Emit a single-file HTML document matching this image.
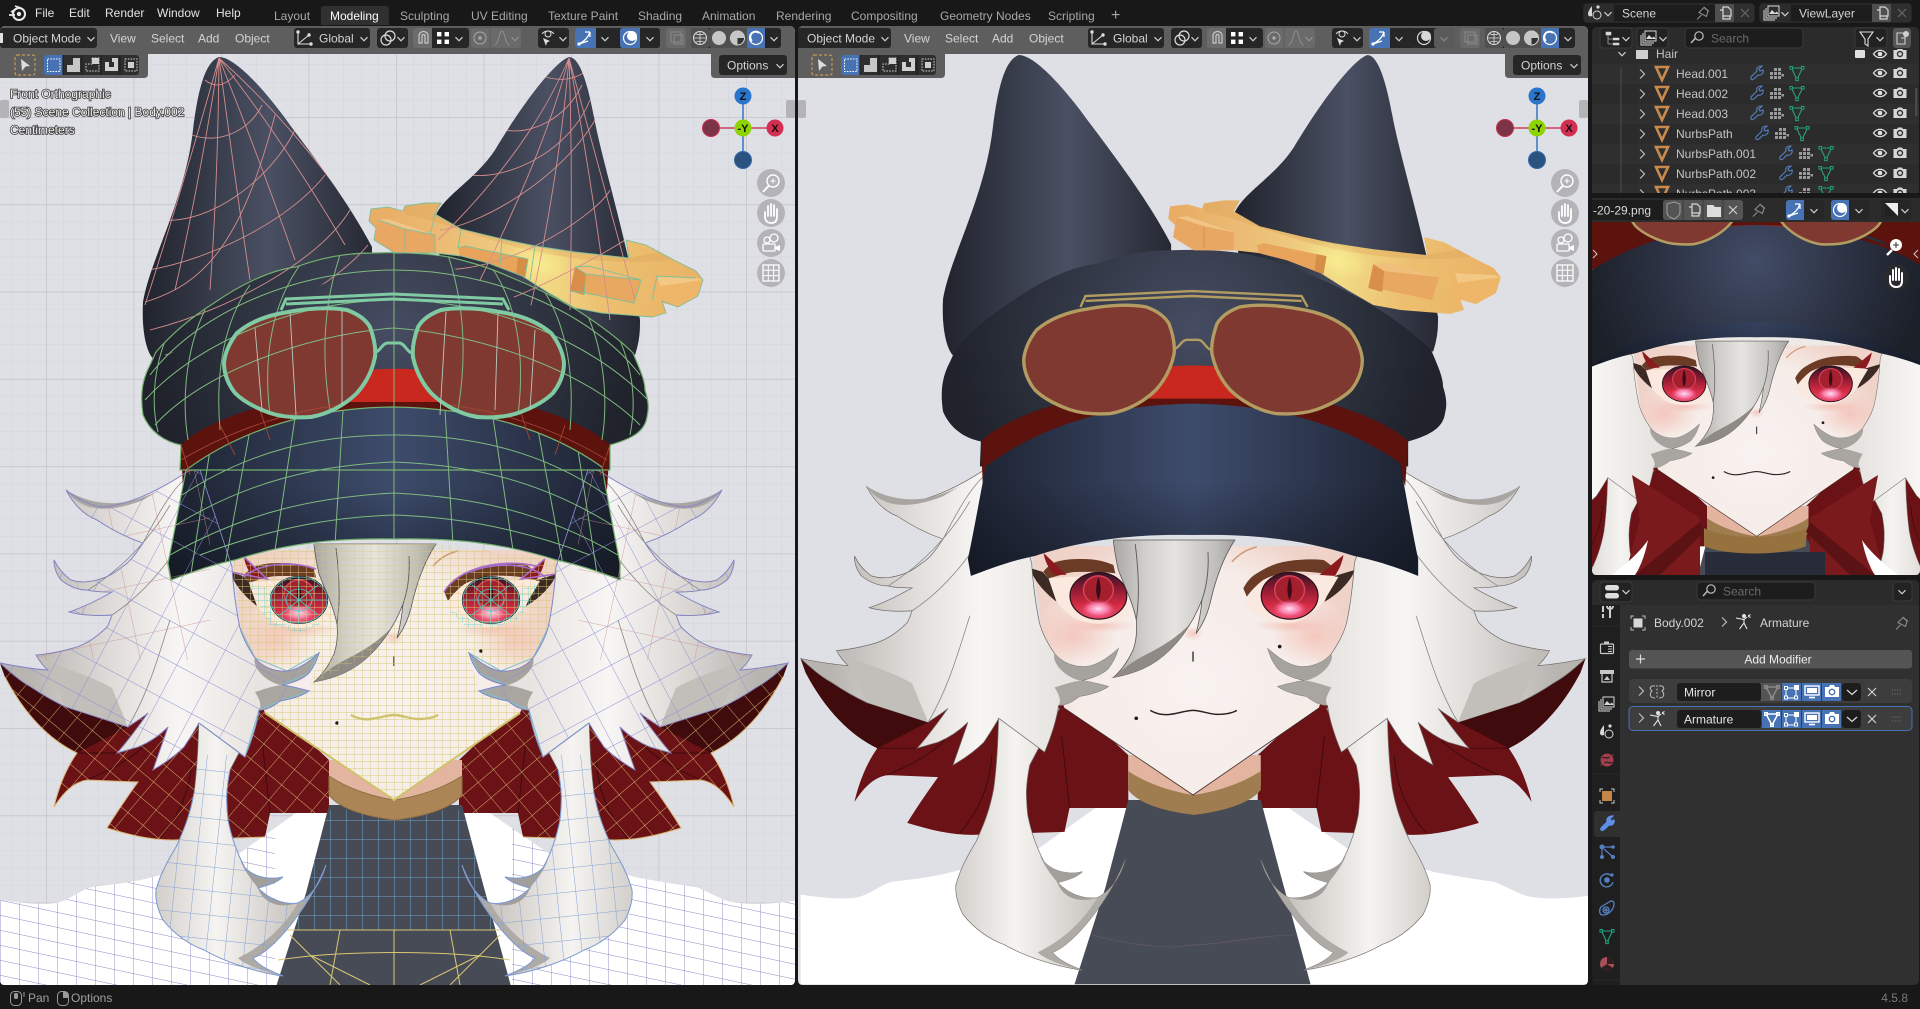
<!DOCTYPE html>
<html><head><meta charset="utf-8"><title>Blender</title>
<style>
html,body{margin:0;padding:0;background:#181818;width:1920px;height:1009px;overflow:hidden}
svg{display:block}
text{font-family:"Liberation Sans",sans-serif;font-size:12px;fill:#c8c8c8;white-space:pre}
.m{fill:#e2e2e2}.t{fill:#a8a8a8}.h{fill:#d4d4d4}.o{fill:#c4c4c4}
.ov{fill:#f2f2f2;stroke:#3a3a3a;stroke-width:1.6px;paint-order:stroke}
.g{font-size:11px;font-weight:bold;fill:#111;text-anchor:middle}
</style></head><body>
<svg width="1920" height="1009" viewBox="0 0 1920 1009" xmlns="http://www.w3.org/2000/svg">
<defs>
<pattern id="pSub" width="17.5" height="17.46" patternUnits="userSpaceOnUse" x="46" y="12.2"><path d="M0 0H17.5M0 0V17.46" stroke="#d4d4dc" stroke-width="1" fill="none"/></pattern>
<pattern id="pMain" width="87.5" height="87.3" patternUnits="userSpaceOnUse" x="46" y="29.7"><path d="M0 0H87.5M0 0V87.3" stroke="#c4c4cb" stroke-width="1.6" fill="none"/></pattern>
<pattern id="pFace" width="8" height="7" patternUnits="userSpaceOnUse" x="394" y="600"><path d="M0 0H8M0 0V7" stroke="#d3c972" stroke-width=".9" fill="none"/></pattern>
<pattern id="pHair" width="36" height="36" patternUnits="userSpaceOnUse" patternTransform="rotate(28)"><path d="M0 0H36M0 0V36" stroke="#8c8cd2" stroke-width=".9" fill="none"/></pattern>
<pattern id="pHair2" width="46" height="50" patternUnits="userSpaceOnUse" patternTransform="rotate(-12)"><path d="M0 0H46M0 0V50" stroke="#c98d8d" stroke-width=".8" fill="none"/></pattern>
<pattern id="pLock" width="19" height="24" patternUnits="userSpaceOnUse" patternTransform="rotate(6)"><path d="M0 0H19M0 0V24" stroke="#83a1d8" stroke-width="1" fill="none"/></pattern>
<pattern id="pRed" width="20" height="20" patternUnits="userSpaceOnUse" patternTransform="rotate(40)"><path d="M0 0H20M0 0V20" stroke="#d8b46f" stroke-width=".9" fill="none"/></pattern>
<pattern id="pBody" width="19" height="15" patternUnits="userSpaceOnUse" patternTransform="skewY(12)"><path d="M0 0H19M0 0V15" stroke="#8d86c6" stroke-width=".9" fill="none"/></pattern>
<pattern id="pNeck" width="16" height="19" patternUnits="userSpaceOnUse" x="394" y="820"><path d="M0 0H16M0 0V19" stroke="#6fa6cf" stroke-width="1" fill="none"/></pattern>
<pattern id="pEye" width="6" height="6" patternUnits="userSpaceOnUse"><path d="M0 0H6M0 0V6" stroke="#6fd4c4" stroke-width="1" fill="none"/></pattern>

<linearGradient id="gEar" x1="0" y1="0" x2="1" y2="0"><stop offset="0" stop-color="#20232c"/><stop offset=".55" stop-color="#4a5063"/><stop offset="1" stop-color="#262933"/></linearGradient>
<radialGradient id="gDome" gradientUnits="userSpaceOnUse" cx="394" cy="330" r="240"><stop offset="0" stop-color="#464c62"/><stop offset=".6" stop-color="#2f3441"/><stop offset="1" stop-color="#20232c"/></radialGradient>
<linearGradient id="gVis" x1="0" y1="0" x2="1" y2="0"><stop offset="0" stop-color="#1c2230"/><stop offset=".5" stop-color="#3e4c6c"/><stop offset="1" stop-color="#1c2230"/></linearGradient>
<linearGradient id="gVisS" x1="0" y1="0" x2="0" y2="1"><stop offset=".45" stop-color="#0c1018" stop-opacity="0"/><stop offset="1" stop-color="#0c1018" stop-opacity=".5"/></linearGradient>
<linearGradient id="gRing" gradientUnits="userSpaceOnUse" x1="375" y1="230" x2="700" y2="290"><stop offset="0" stop-color="#e9ad66"/><stop offset=".3" stop-color="#edc27a"/><stop offset=".52" stop-color="#f2dc86"/><stop offset=".72" stop-color="#ecc070"/><stop offset="1" stop-color="#eab266"/></linearGradient>
<radialGradient id="gRingH"><stop offset="0" stop-color="#f8ec90"/><stop offset="1" stop-color="#f8ec90" stop-opacity="0"/></radialGradient>
<linearGradient id="gHair" gradientUnits="userSpaceOnUse" x1="30" y1="640" x2="260" y2="640"><stop offset="0" stop-color="#b8b5b1"/><stop offset=".35" stop-color="#dedbd8"/><stop offset=".65" stop-color="#f8f6f4"/><stop offset="1" stop-color="#e6e3e0"/></linearGradient>
<linearGradient id="gLock" gradientUnits="userSpaceOnUse" x1="160" y1="850" x2="300" y2="850"><stop offset="0" stop-color="#d5d2ce"/><stop offset=".4" stop-color="#f6f4f1"/><stop offset="1" stop-color="#c5c1bd"/></linearGradient>
<linearGradient id="gBang" x1="0" y1="0" x2="1" y2="0"><stop offset="0" stop-color="#a9a7a4"/><stop offset=".25" stop-color="#d0cecb"/><stop offset=".5" stop-color="#e6e4e1"/><stop offset=".85" stop-color="#c0bebb"/><stop offset="1" stop-color="#a0a09e"/></linearGradient>
<radialGradient id="gFace" gradientUnits="userSpaceOnUse" cx="394" cy="690" r="170"><stop offset="0" stop-color="#f8f2f0"/><stop offset=".7" stop-color="#f6ece8"/><stop offset="1" stop-color="#efd2c8"/></radialGradient>
<radialGradient id="gCheek"><stop offset="0" stop-color="#f3bdb2" stop-opacity=".75"/><stop offset="1" stop-color="#f3bdb2" stop-opacity="0"/></radialGradient>
<linearGradient id="gIris" x1="0" y1="0" x2="0" y2="1"><stop offset="0" stop-color="#301428"/><stop offset=".35" stop-color="#8b1a30"/><stop offset=".7" stop-color="#d42c44"/><stop offset="1" stop-color="#e84a70"/></linearGradient>
<radialGradient id="gPink"><stop offset="0" stop-color="#ffe0f2"/><stop offset=".55" stop-color="#ff90c0" stop-opacity=".8"/><stop offset="1" stop-color="#ff6090" stop-opacity="0"/></radialGradient>
<radialGradient id="gHatI" gradientUnits="userSpaceOnUse" cx="1755" cy="262" r="170"><stop offset="0" stop-color="#424c66"/><stop offset=".6" stop-color="#2a3040"/><stop offset="1" stop-color="#1c2029"/></radialGradient>

<path id="earL" d="M219 57C205 62 198 90 193 130C185 200 150 260 143 302C141 340 150 360 156 360L372 262V247C350 205 320 165 290 125C265 90 235 57 219 57Z"/>
<path id="earR" d="M569 57C555 62 525 100 495 150C475 180 445 195 436 215L440 262L635 355C640 340 640 330 640 320C635 290 628 257 628 257C615 200 600 150 594 117C588 85 580 57 569 57Z"/>
<path id="dome" d="M143 415C140 395 142 380 150 365L156 352C175 330 195 315 214 303C240 285 270 270 296 267C320 258 345 253 372 253C400 252 425 253 449 257C475 263 495 270 510 277C535 287 560 300 577 310C600 325 620 340 633 353C640 370 645 380 645 390C650 405 648 412 647 417C645 430 635 438 610 445L610 470H180L181 445C165 442 150 432 143 415Z"/>
<path id="visor" d="M186 470C240 430 310 408 393 407C480 408 550 430 602 467C608 500 615 540 620 563V580C600 572 580 565 556 560C500 542 450 538 394 539C340 538 290 542 235 560C210 565 190 573 171 580L168 563C175 530 180 500 186 470Z"/>
<path id="hairS" d="M190 470C160 490 130 505 102 507C88 505 76 498 66 490C74 505 84 515 97 520C112 530 128 538 143 543C135 555 130 562 122 567C112 575 105 578 97 580C85 583 78 582 71 580C64 575 58 568 54 560C54 568 57 575 61 580C70 587 78 590 87 590C95 592 104 592 112 592C98 600 84 607 69 612C84 616 98 616 112 615C110 620 109 624 107 627C97 637 88 643 77 647C63 651 50 654 36 655C40 662 44 667 48 670C32 669 15 666 0 663C10 672 20 681 31 687C43 695 55 702 66 707L128 727C135 722 142 718 148 713C138 727 128 741 117 753L138 747C150 742 160 735 168 727C163 741 158 756 153 770C165 763 176 755 184 747C190 738 195 730 199 723L245 757C252 740 257 725 259 710C268 710 275 705 280 701C292 699 302 696 309 691C298 688 290 686 282 685C292 683 302 680 309 673C313 668 317 660 319 653C308 663 297 670 287 671C275 672 262 667 255 658C246 645 242 635 240 628C236 610 233 585 232 567L200 470Z"/>
<path id="lock" d="M199 700C199 745 197 770 194 793C190 815 184 830 176 847C167 862 160 875 156 890C155 900 158 910 163 920C175 935 190 945 204 950C225 962 255 972 283 976C268 970 258 965 253 958C275 950 310 905 326 865C320 885 310 897 298 903C285 905 270 900 258 888C265 886 275 884 283 877C270 880 255 878 245 868C238 855 232 840 228 820C226 800 226 790 230 770L260 713Z"/>
<path id="redH" d="M0 663L5 677C25 715 50 740 77 753C65 770 58 790 54 807C65 790 75 782 87 780L138 782C125 800 115 815 107 828C130 835 150 840 173 840L265 837L270 813H329V760L265 700L150 690L31 685Z"/>
<path id="redO" d="M0 663L5 677C25 715 50 740 77 753L128 727L66 707L31 687Z"/>
<path id="face" d="M232 550H556L560 600L545 650L520 713L394 800L265 713L245 660Z"/>
<path id="neck" d="M329 805H462L480 873L512 990H275L306 893Z"/>
<path id="body" d="M0 900C20 903 40 905 56 903C70 900 80 890 92 887C110 885 135 882 153 877L240 853L296 813L327 812H460L490 813L548 853L635 877C650 880 680 885 696 887C710 892 725 903 740 903C760 905 780 903 800 900V990H0Z"/>
<path id="lens" d="M288 312C310 308 330 307 347 310C358 314 366 320 370 327C374 338 376 348 375 357C372 372 365 384 357 393C345 405 328 414 311 417C296 418 282 417 270 413C256 408 244 402 235 393C228 384 224 374 224 363C225 352 230 342 237 333C250 322 268 315 288 312Z"/>
<path id="ring" d="M371 209L388 207L403 211L405 206L425 203L441 203L435 214L461 229L502 239L535 246L575 252L629 258L626 240L646 245L674 260L696 271L703 280L698 296L678 307L662 301L666 313L652 317L602 313L575 308L549 293L522 276L488 263L461 256L435 253L395 253L374 240L376 228L369 221Z"/>

<g id="halfBack"><use href="#redH" fill="#6b1216"/><use href="#redO" fill="#3f0b0d"/>
  <path d="M270 813L262 740M232 835L200 745M160 838C180 815 190 790 192 760M77 753L117 753M87 780C110 770 130 760 145 745" fill="none" stroke="#3a0a0c" stroke-width=".9"/>
</g>
<g id="halfLock">
  <use href="#lock" fill="url(#gLock)" stroke="#77736f" stroke-width=".7"/>
  <path d="M326 865C310 905 275 950 253 958C258 965 268 970 283 976C265 972 245 965 238 958C265 945 285 925 298 903C310 897 320 885 326 865Z" fill="#aeaaa6"/>
  <path d="M283 877C275 884 265 886 258 888C252 880 246 874 240 860C248 875 265 880 283 877Z" fill="#a29e9a"/>
  <path d="M298 903C285 905 270 900 258 888C262 900 275 910 298 903Z" fill="#a29e9a"/>
</g>
<g id="halfHair">
  <use href="#hairS" fill="url(#gHair)" stroke="#6f6b68" stroke-width=".7"/>
  <path d="M36 655C60 668 90 675 112 688L128 727L66 707L48 670Z" fill="#c2beba"/>
  <path d="M319 653C308 663 297 670 287 671C275 672 262 667 255 658C252 665 262 680 280 685C292 683 302 680 309 673C313 668 317 660 319 653Z" fill="#a6a29e"/>
  <path d="M309 691C298 688 290 686 282 685C272 686 262 690 255 692C260 700 262 706 259 710C268 710 275 705 280 701C292 699 302 696 309 691Z" fill="#a9a5a1"/>
  <path d="M66 490C80 510 105 515 143 500L160 490C130 505 100 510 66 490Z" fill="#a9a5a1"/>
  <path d="M143 543C160 510 172 490 186 478M88 590C120 570 150 540 170 505M112 615C150 590 190 540 205 490M128 727C150 690 160 650 170 620" stroke="#8a8684" stroke-width=".8" fill="none"/>
</g>
<g id="eyeL">
  <path d="M230 572C234 584 244 596 257 606L249 582.500L243 576Z" fill="#3c2a24"/>
  <path d="M249 582.500L270.500 581H300L321 582.500L331 619C318 626 308 628 297 628C285 627 275 624 270.500 619C262 613 257 606 257 606Z" fill="#fbe9e0"/>
  <path d="M243.700 576C248 570 254 566 260 565C268 563 276 563 284 563C295 563 305 565 314 569L316 577.500C305 576 295 576 284 576C278 576 272 576 267 577.500L249 582.500Z" fill="#6b3b26"/>
  <path d="M244 557L267 579H254C249 572 245 565 244 557Z" fill="#8a1a1e"/>
  <ellipse cx="299" cy="600" rx="28.500" ry="23.400" fill="url(#gIris)" stroke="#2a0f18" stroke-width="1.200"/>
  <ellipse cx="299" cy="594" rx="15" ry="14" fill="#a5202f" stroke="#d84258" stroke-width="1.500"/>
  <path d="M299 581C296 590 296 598 299 604C302 598 302 590 299 581Z" fill="#3e0a18"/>
  <ellipse cx="299" cy="613" rx="17" ry="9" fill="url(#gPink)"/>
</g>
<g id="eyeR">
  <path d="M556.600 574C552 586 540 598 526 606L536.500 580Z" fill="#3c2a24"/>
  <path d="M446 607.600L461 584L518 579L540 581L525 606C518 614 508 622 498 626C488 628 478 627 471 624C460 620 452 614 446 607.600Z" fill="#fbe9e0"/>
  <path d="M444.500 592.500C448 586 452 581 458 577.500C468 571 476 568 485 566C500 563 515 563 525 564C530 567 535 571 538 576L525 577.500C512 576 500 575 488 576C480 578 472 580 464.600 584C458 589 452 595 448 601Z" fill="#6b3b26"/>
  <path d="M545 559L521 579L536.500 580C541 573 544 566 545 559Z" fill="#8a1a1e"/>
  <ellipse cx="491" cy="600" rx="28.500" ry="23.400" fill="url(#gIris)" stroke="#2a0f18" stroke-width="1.200"/>
  <ellipse cx="491" cy="594" rx="15" ry="14" fill="#a5202f" stroke="#d84258" stroke-width="1.500"/>
  <path d="M491 581C488 590 488 598 491 604C494 598 494 590 491 581Z" fill="#3e0a18"/>
  <ellipse cx="491" cy="613" rx="17" ry="9" fill="url(#gPink)"/>
  <path d="M433 566C440 558 449 553 458 551" fill="none" stroke="#cf9878" stroke-width="1.500"/>
</g>
<g id="charA">
  <use href="#body" fill="#fff"/>
  <use href="#halfBack"/><use href="#halfBack" transform="matrix(-1 0 0 1 788 0)"/>
  <use href="#earL" fill="url(#gEar)"/><use href="#earR" fill="url(#gEar)"/>
  <use href="#neck" fill="#474b55"/>
  <path d="M329 760H462V790L395 812L329 790Z" fill="#e3b5a0"/>
  <path d="M329 776C350 790 375 797 394 800C415 797 440 790 462 776V795C450 810 420 817 395 820C370 817 340 810 329 795Z" fill="#a07d50"/>
  <use href="#face" fill="url(#gFace)"/>
  <path d="M265 713L394 800L520 713" fill="none" stroke="#3a2a28" stroke-width=".8"/>
  <ellipse cx="275" cy="640" rx="42" ry="30" fill="url(#gCheek)"/><ellipse cx="515" cy="640" rx="42" ry="30" fill="url(#gCheek)"/>
  <ellipse cx="300" cy="630" rx="38" ry="7" fill="url(#gCheek)"/><ellipse cx="492" cy="630" rx="38" ry="7" fill="url(#gCheek)"/>
  <ellipse cx="394" cy="638" rx="10" ry="7" fill="url(#gCheek)"/>
  <use href="#eyeL"/><use href="#eyeR"/>
  <path d="M351 715C358 719 364 720 371 719C380 718 387 715 394 715C402 715 410 719 418 719C426 719 433 718 438 715" fill="none" stroke="#2a2222" stroke-width="1.500"/>
  <circle cx="337" cy="723" r="1.800" fill="#1a1a1a"/><circle cx="481" cy="651" r="1.800" fill="#1a1a1a"/>
  <rect x="393.300" y="656" width="1.400" height="10" fill="#333"/>
</g>
<g id="charB"><use href="#halfLock"/><use href="#halfLock" transform="matrix(-1 0 0 1 788 0)"/></g>
<g id="charC">
  <use href="#halfHair"/><use href="#halfHair" transform="matrix(-1 0 0 1 788 0)"/>
  <path d="M314 544C315 555 317 565 319 574C325 590 333 605 337 624C338 635 337 645 334 654C329 665 322 675 314 682C325 680 335 677 344 673C355 668 363 662 371 654C385 640 396 622 403 604C402 615 400 627 397 638C403 630 408 620 411 608C415 590 422 565 436 544Z" fill="url(#gBang)" stroke="#5b5754" stroke-width=".8"/>
  <path d="M314 682C325 680 335 677 344 673C355 668 363 662 371 654C378 646 385 637 391 628C380 640 365 650 345 660C335 665 325 672 314 682Z" fill="#8f8a86"/>
  <path d="M409 556C410 575 408 590 403 604M336 548C340 580 340 605 337 624" stroke="#5b5754" fill="none" stroke-width=".9"/>
  <use href="#dome" fill="url(#gDome)"/>
  <path d="M181 445C200 425 260 402 300 400H490C530 402 590 425 610 445L607 490L600 470L186 470L183 490Z" fill="#5c120d"/>
  <path d="M360 371C380 368 410 368 430 371L446 402L343 402Z" fill="#c9281e"/>
  <use href="#visor" fill="url(#gVis)"/><use href="#visor" fill="url(#gVisS)"/>
  <g fill="#803930" stroke="#b39c62" stroke-width="3.400"><use href="#lens"/><use href="#lens" transform="matrix(-1 0 0 1 788 0)"/></g>
  <path d="M281 310L286 299L393 294L503 299L509 310M286 304L393 299L503 304M375 352C380 352 382 343 388 343H399C405 343 407 353 413 353" fill="none" stroke="#b39c62" stroke-width="2.400"/>
  <use href="#ring" fill="url(#gRing)"/>
  <path d="M405 206L425 203L441 203L435 214L461 229L502 239L535 246L575 252L629 258L660 252L674 260L640 262C600 262 560 258 520 248C480 238 450 225 420 218L405 214Z" fill="#dca45c" opacity=".4"/>
  <ellipse cx="538" cy="263" rx="34" ry="18" fill="url(#gRingH)" transform="rotate(15 538 263)"/>
  <path d="M378 220L405 229L435 235V253H395L374 240L376 228Z" fill="#e8a864"/>
  <path d="M378 220L388 219L435 235L405 229Z" fill="#f2c488"/>
  <path d="M405 229V251" stroke="#d69449"/>
  <path d="M458 248L465 246L528 259L525 277L488 263L460 256Z" fill="#e9a45c"/>
  <path d="M528 259L525 277L516 274L518 257Z" fill="#d48f47"/>
  <path d="M575 267L589 266L641 280L634 303L586 293L570 291Z" fill="#e9a85f"/>
  <path d="M575 267L586 274L584 295L570 291Z" fill="#d98f4a"/>
  <path d="M575 267L589 266L641 280L586 274Z" fill="#f0bf7c"/>
  <path d="M657 276L696 278L703 280L698 296L678 307L652 300Z" fill="#eeb669"/>
  <path d="M657 276L696 278L703 280L660 286Z" fill="#f3c884"/>
</g>
<g id="char"><use href="#charA"/><use href="#charB"/><use href="#charC"/></g>

<clipPath id="cL"><path d="M0 32Q0 26 6 26H789Q795 26 795 32V980Q795 985 790 985H5Q0 985 0 980Z"/></clipPath>
<clipPath id="cR"><path d="M798 32Q798 26 804 26H1582Q1588 26 1588 32V980Q1588 985 1583 985H803Q798 985 798 980Z"/></clipPath>
<clipPath id="cImg"><path d="M1592 222H1920V570Q1920 575 1915 575H1597Q1592 575 1592 570Z"/></clipPath>
<clipPath id="cOut"><rect x="1592" y="49" width="327" height="144"/></clipPath>
<clipPath id="kEarL"><use href="#earL"/></clipPath><clipPath id="kEarR"><use href="#earR"/></clipPath>
<clipPath id="kDome"><use href="#dome"/></clipPath><clipPath id="kVisor"><use href="#visor"/></clipPath>
<clipPath id="kHair"><use href="#hairS"/></clipPath><clipPath id="kLock"><use href="#lock"/></clipPath>
<clipPath id="kRed"><use href="#redH"/></clipPath><clipPath id="kFace"><use href="#face"/></clipPath>
<clipPath id="kBody"><use href="#body"/></clipPath><clipPath id="kNeck"><use href="#neck"/></clipPath>

<g id="chv"><path d="M-3.500-1.800L0 1.800L3.500-1.800" fill="none" stroke="#d0d0d0" stroke-width="1.200"/></g>
<g id="chr"><path d="M-2-4.500L2.500 0L-2 4.500" fill="none" stroke="#bdbdbd" stroke-width="1.200"/></g>
<g id="iObj"><path d="M-6-6H6L0 7Z" fill="none" stroke="#c98a4d" stroke-width="2.600"/></g>
<g id="iWr"><path d="M-6 6C-7 4-5 3-3 1L0-2C-1-5 1-7 5-7L2-4L3-2L6-3C7 1 3 3 1 2L-2 5C-4 7-5 7-6 6Z" fill="none" stroke="#5680c2" stroke-width="1.100"/></g>
<g id="iMod" fill="#9a9a9a"><rect x="-7" y="-1" width="3" height="3"/><rect x="-7" y="3" width="3" height="3"/><rect x="-3" y="-5" width="3" height="3"/><rect x="-3" y="-1" width="3" height="3"/><rect x="-3" y="3" width="3" height="3"/><rect x="1" y="-5" width="3" height="3"/><rect x="1" y="-1" width="3" height="3"/><rect x="1" y="3" width="3" height="3"/><rect x="4.500" y="1" width="2.500" height="2.500"/></g>
<g id="iTri"><path d="M-5.500-5H5.500L0 6.500Z" fill="none" stroke="#26a17d" stroke-width="1.100"/><g fill="#1f2a28" stroke="#26a17d"><rect x="-7" y="-6.500" width="2.600" height="2.600"/><rect x="4.400" y="-6.500" width="2.600" height="2.600"/><rect x="-1.300" y="5" width="2.600" height="2.600"/></g></g>
<g id="iEye"><path d="M-6.500 0C-3-5 3-5 6.500 0C3 5-3 5-6.500 0Z" fill="none" stroke="#e0e0e0" stroke-width="1.300"/><circle r="2.300" fill="#e0e0e0"/></g>
<g id="iCam"><path d="M-6.500-4H-3L-2-5.500H2L3-4H6.500V5H-6.500Z" fill="#d8d8d8"/><circle r="3.200" fill="#333"/><circle r="1.800" fill="#d8d8d8"/></g>
<g id="iCamW"><path d="M-7-4H-3L-2-6H2L3-4H7V6H-7Z" fill="#fff"/><circle cy="1" r="3.400" fill="#4772b3"/><circle cy="1" r="2" fill="#fff"/></g>
<g id="iDisp"><rect x="-7" y="-6" width="14" height="9" fill="none" stroke="#fff" stroke-width="1.400"/><rect x="-5" y="-4" width="10" height="5" fill="#fff"/><path d="M-3 5.500H3" stroke="#fff" stroke-width="1.600"/></g>
<g id="iEdit"><rect x="-6" y="-4" width="10" height="10" fill="none" stroke="#fff"/><rect x="2" y="-7" width="5" height="5" fill="#fff"/><g fill="#4772b3" stroke="#fff"><rect x="-7.500" y="-5.500" width="3" height="3"/><rect x="-7.500" y="4" width="3" height="3"/><rect x="2.500" y="4" width="3" height="3"/></g></g>
<g id="iMesh"><path d="M-6-5H6L0 6Z" fill="none" stroke="currentColor" stroke-width="1.500"/><g fill="none" stroke="currentColor"><rect x="-7.500" y="-6.500" width="3" height="3"/><rect x="4.500" y="-6.500" width="3" height="3"/><rect x="-1.500" y="4.500" width="3" height="3"/></g></g>
<g id="iArm" fill="none" stroke="#e6e6e6" stroke-width="1.100"><circle cx="1" cy="-6" r="1.400" fill="#e6e6e6"/><path d="M-7-4L1-2.500L4-5M1-3.500V1L-3.500 7M1 1L4 7M5-6L7.500-7.500M5-6L7.500-4.500"/></g>
<g id="iPin"><path d="M-6 6.500L-1.500 2M-4-0.500L3.500 3.500L5-2L1-5.500Z M1-6L6-1.500" fill="none" stroke="#8a8a8a" stroke-width="1.100"/></g>
<g id="iCopy"><path d="M-5-3H-2V6H5V3M-2-6H3L6-3V3H-2Z" fill="none" stroke="#d8d8d8" stroke-width="1.200"/></g>
<g id="iX"><path d="M-4-4L4 4M4-4L-4 4" fill="none" stroke="#d0d0d0" stroke-width="1.200"/></g>
<g id="iSearch"><circle cx="2" cy="-2" r="4.200" fill="none" stroke="#bbb" stroke-width="1.200"/><path d="M-1-.5L-6 5" stroke="#bbb" stroke-width="1.500"/></g>
<g id="iScene"><path d="M-3-7C-6-3-7-1-7 1C-7 3-5 4-3 3V-7Z" fill="#d8d8d8"/><circle cx="2" cy="2" r="4" fill="none" stroke="#d8d8d8"/><circle cx="3" cy="-6" r="1.600" fill="#d8d8d8"/></g>
<g id="iLayer"><path d="M-4-7H7V3H-4Z" fill="none" stroke="#d8d8d8"/><path d="M-6-5V5H5M-8-3V7H3" fill="none" stroke="#d8d8d8"/><path d="M-3 1L0-3L3 0L5-1.500L6.500 1Z" fill="#d8d8d8"/></g>
<g id="iGiz"><path d="M-6 6C-2 4 3 0 5-6M-6 6L3 3M5-6H0M5-6V-1" fill="none" stroke="#fff" stroke-width="1.300"/><circle cx="-6" cy="6" r="1.600" fill="#fff"/></g>
<g id="iOver"><circle r="6.500" fill="none" stroke="currentColor" stroke-width="1.200"/><circle cx="2" cy="-2" r="5" fill="currentColor"/></g>
<g id="iView"><circle cy="-3" r="3" fill="none" stroke="#ddd"/><path d="M-6-3C-3-7 3-7 6-3" fill="none" stroke="#ddd"/><path d="M-5 1L2 4L-1 5.500L-2 9Z" fill="#ddd"/></g>
<g id="iOrient"><path d="M-7-7V6H6M-7 6L4-3" fill="none" stroke="#ddd" stroke-width="1.100"/><circle cx="-7" cy="-6" r="1.700" fill="#ddd"/><circle cx="6" cy="6" r="1.700" fill="#ddd"/><circle cx="4" cy="-3" r="1.700" fill="#ddd"/></g>
<g id="iPivot"><circle cx="-2" cy="2" r="5" fill="none" stroke="#ddd" stroke-width="1.200"/><circle cx="2" cy="-2" r="5" fill="none" stroke="#ddd" stroke-width="1.200"/></g>
<g id="iMag"><path d="M-4 5V-2C-4-8 5-8 5-2V5H2V-2C2-4-1-4-1-2V5Z" fill="none" stroke="#c8c8c8" stroke-width="1.200"/></g>
<g id="iSnapG" fill="#fff"><rect x="-6" y="-6" width="4.400" height="4.400"/><rect x="1.600" y="-6" width="4.400" height="4.400"/><rect x="-6" y="1.600" width="4.400" height="4.400"/><rect x="1.600" y="1.600" width="4.400" height="4.400"/></g>

<g id="sel">
  <rect x="44" y="55" width="95" height="20" rx="3" fill="#2e2e2e"/>
  <path d="M47 55H63V75H47Q44 75 44 72V58Q44 55 47 55Z" fill="#4772b3"/>
  <rect x="47.500" y="59" width="12.500" height="12.500" fill="none" stroke="#fff" stroke-dasharray="1.600 1.200"/>
  <path d="M73 58H80V72H67V65H73Z" fill="#c6c6c6"/>
  <path d="M92 58H99V71H92M92 58V64H86V71H92" fill="none" stroke="#d0d0d0" stroke-dasharray="1.600 1.200"/><path d="M92 58H99V64H92Z" fill="#d0d0d0"/>
  <path d="M105 62H112V58H118V71H105Z" fill="#d0d0d0"/><rect x="109" y="62" width="5" height="5" fill="#2e2e2e"/>
  <rect x="125" y="59" width="12" height="12" fill="none" stroke="#cfcfcf" stroke-dasharray="1.600 1.200"/><rect x="128" y="62" width="6" height="6" fill="#cfcfcf"/>
  <path d="M63 55V75M82 55V75M101 55V75M120 55V75" stroke="#1c1c1c"/>
  <rect x="15" y="55" width="20" height="20" rx="2" fill="none" stroke="#c7994f" stroke-width="1.200" stroke-dasharray="3 2"/>
  <path d="M21 59L30 66L25.500 66.500L22 71Z" fill="#ddd"/>
</g>
<g id="hdr">
  <rect x="0" y="28" width="97" height="20" rx="3" fill="#262626"/>
  <rect x="-1" y="33" width="4" height="10" fill="#e0e0e0"/>
  <text x="13" y="42.500" class="h">Object Mode</text><use href="#chv" transform="translate(91,39)"/>
  <text x="110" y="42.500" class="h">View</text><text x="151" y="42.500" class="h">Select</text><text x="198" y="42.500" class="h">Add</text><text x="235" y="42.500" class="h">Object</text>
  <rect x="294" y="28" width="76" height="20" rx="3" fill="#262626"/><use href="#iOrient" transform="translate(305,38)"/>
  <text x="319" y="42.500" class="h">Global</text><use href="#chv" transform="translate(364,39)"/>
  <rect x="377" y="28" width="31" height="20" rx="3" fill="#262626"/><use href="#iPivot" transform="translate(388,38)"/><use href="#chv" transform="translate(401,39)"/>
  <rect x="413" y="28" width="56" height="20" rx="3" fill="#262626"/><path d="M416 28H432V48H416Q413 48 413 45V31Q413 28 416 28Z" fill="#6c6c6c"/>
  <use href="#iMag" transform="translate(423,38)"/><use href="#iSnapG" transform="translate(443,38)"/><use href="#chv" transform="translate(459,39)"/>
  <rect x="471" y="28" width="50" height="20" rx="3" fill="#6a6a6a"/><path d="M490 28V48" stroke="#5a5a5a"/>
  <circle cx="480" cy="38" r="6" fill="none" stroke="#aaa"/><circle cx="480" cy="38" r="1.700" fill="#aaa"/><path d="M494 45C499 45 499 31 502 31C505 31 505 45 510 45" fill="none" stroke="#8c8c8c"/><use href="#chv" transform="translate(515,39)" opacity=".4"/>
  <rect x="538" y="28" width="31" height="20" rx="3" fill="#262626"/><use href="#iView" transform="translate(548,37)"/><use href="#chv" transform="translate(563,39)"/>
  <rect x="575" y="28" width="48" height="20" rx="3" fill="#262626"/><path d="M578 28H596V48H578Q575 48 575 45V31Q575 28 578 28Z" fill="#4772b3"/><use href="#iGiz" transform="translate(585,38)"/><use href="#chv" transform="translate(605,39)"/>
  <rect x="666" y="28" width="20" height="20" rx="3" fill="#6a6a6a"/><rect x="671" y="32" width="10" height="10" fill="none" stroke="#8a8a8a"/><rect x="674" y="35" width="9" height="9" fill="none" stroke="#8a8a8a"/>
  <rect x="691" y="28" width="90" height="20" rx="3" fill="#262626"/>
  <rect x="691" y="28" width="19" height="20" rx="3" fill="#505050"/><rect x="710" y="28" width="18" height="20" fill="#505050"/><rect x="728" y="28" width="19" height="20" fill="#505050"/><rect x="747" y="28" width="18" height="20" fill="#4772b3"/>
  <circle cx="700" cy="38" r="6.500" fill="none" stroke="#ddd"/><path d="M693.500 38H706.500M700 31.500V44.500M695 33.500Q700 36 705 33.500M695 42.500Q700 40 705 42.500" fill="none" stroke="#ddd" stroke-width=".8"/>
  <circle cx="719" cy="38" r="7" fill="#c6c6c6"/>
  <circle cx="737.500" cy="38" r="7" fill="#333" stroke="#ddd"/><path d="M737.500 31A7 7 0 0 1 744.500 38H737.500V45A7 7 0 0 1 730.500 38A7 7 0 0 1 737.500 31Z" fill="#c6c6c6"/>
  <circle cx="756" cy="38" r="6.500" fill="none" stroke="#fff" stroke-width="1.200"/><path d="M752 41A5 5 0 0 1 759 33" fill="none" stroke="#fff" stroke-width="2"/>
  <use href="#chv" transform="translate(774,39)"/>
</g>
<g id="opt"><rect x="719" y="55" width="68" height="20" rx="3" fill="#262626"/><text x="727" y="69.500" class="h">Options</text><use href="#chv" transform="translate(780,66)"/></g>
<g id="giz">
  <path d="M743 96V160" stroke="#3d7bc8" stroke-width="1.600"/><path d="M711 128H775" stroke="#cc4158" stroke-width="1.600"/>
  <circle cx="743" cy="96" r="8.500" fill="#2a75cc"/><circle cx="743" cy="160" r="8.500" fill="#29527f" stroke="#2f69aa"/>
  <circle cx="775" cy="128" r="8.500" fill="#d32f50"/><circle cx="711" cy="128" r="8.500" fill="#7c3345" stroke="#c4304b"/>
  <circle cx="743" cy="128" r="8.500" fill="#8ed400"/>
  <text x="743" y="100" class="g">Z</text><text x="775" y="132" class="g">X</text><text x="743" y="132" class="g">-Y</text>
  <g fill="#b4b4b8"><circle cx="771" cy="183" r="14"/><circle cx="771" cy="213" r="14"/><circle cx="771" cy="243" r="14"/><circle cx="771" cy="273" r="14"/></g>
  <circle cx="773" cy="181" r="6" fill="none" stroke="#fff" stroke-width="1.400"/><path d="M773 178.500V183.500M770.500 181H775.500" stroke="#fff"/><path d="M769 185.500L763 192" stroke="#fff" stroke-width="2"/>
  <path d="M765 212V217C765 221 768 223 771 223C776 223 777 220 777 217V209M774 216V205M771 216V204M768 216V206" fill="none" stroke="#fff" stroke-width="1.800" stroke-linecap="round"/>
  <circle cx="767" cy="240" r="3" fill="none" stroke="#fff" stroke-width="1.300"/><circle cx="774" cy="238" r="4" fill="none" stroke="#fff" stroke-width="1.300"/><rect x="763" y="244" width="12" height="7" rx="1" fill="none" stroke="#fff" stroke-width="1.300"/><path d="M775 247L780 245V251L775 249Z" fill="#fff"/>
  <rect x="763" y="265" width="16" height="16" fill="none" stroke="#fff" stroke-width="1.300"/><path d="M768.300 265V281M773.600 265V281M763 270.300H779M763 275.600H779" stroke="#fff"/>
</g>
</defs>

<rect width="1920" height="1009" fill="#181818"/>

<!-- LEFT VIEWPORT -->
<g clip-path="url(#cL)">
  <rect x="0" y="26" width="795" height="959" fill="#dfdfe6"/>
  <rect x="0" y="26" width="795" height="959" fill="url(#pSub)"/>
  <rect x="0" y="26" width="795" height="959" fill="url(#pMain)"/>
  <use href="#charA"/>
  <g clip-path="url(#kBody)"><path d="M0 812H275V1000H0ZM512 812H800V1000H512Z" fill="url(#pBody)"/></g>
  <g clip-path="url(#kRed)"><rect x="0" y="660" width="330" height="190" fill="url(#pRed)"/></g>
  <g clip-path="url(#kRed)" transform="matrix(-1 0 0 1 788 0)"><rect x="0" y="660" width="330" height="190" fill="url(#pRed)"/></g>
  <path d="M5 677C25 715 50 740 77 753C65 770 58 790 54 807C65 790 75 782 87 780L138 782C125 800 115 815 107 828C130 835 150 840 173 840L265 837" fill="none" stroke="#d8b46f"/>
  <path d="M783 677C763 715 738 740 711 753C723 770 730 790 734 807C723 790 713 782 701 780L650 782C663 800 673 815 681 828C658 835 638 840 615 840L523 837" fill="none" stroke="#d8b46f"/>
  <g clip-path="url(#kNeck)"><rect x="270" y="810" width="250" height="120" fill="url(#pNeck)"/></g>
  <path d="M285 930H505M278 960C340 950 450 950 510 960M290 935L340 985M500 935L450 985M340 930L330 985M450 930L460 985M394 930V985M310 955L370 985M480 955L420 985" stroke="#d9c873" fill="none"/>
  <path d="M329 776C350 790 375 797 394 800C415 797 440 790 462 776V795C450 810 420 817 395 820C370 817 340 810 329 795Z" fill="#ab8556" stroke="#8d7044"/>
  <path d="M232 560L240 628L255 658L287 671L319 653L309 691L280 701L265 713L394 800L520 713L505 701L479 691L469 653L501 671L533 658L548 628L556 560L436 544H314Z" fill="url(#pFace)" opacity=".95"/>
  <path d="M265 713L394 800L520 713" fill="none" stroke="#cfc26a" stroke-width="2"/>
  <path d="M351 715C358 719 364 720 371 719C380 718 387 715 394 715C402 715 410 719 418 719C426 719 433 718 438 715" fill="none" stroke="#cfc26a" stroke-width="2.400"/>
  <g clip-path="url(#kFace)" opacity=".9"><path d="M249 582L272 590V620L300 628L331 619L300 633L268 624Z" fill="url(#pEye)"/><path d="M540 582L518 590V620L490 628L446 608L470 630L525 612Z" fill="url(#pEye)"/></g>
  <path d="M244 577C258 564 290 560 316 569M244 557L267 579L230 572M545 577C530 564 498 560 464 574M545 559L521 579L556 574M444 592C458 568 500 558 536 566" fill="none" stroke="#a76cc9" stroke-width="1.600"/>
  <g fill="none" stroke="#4fc7c4" stroke-width=".8"><ellipse cx="299" cy="600" rx="28" ry="23"/><ellipse cx="491" cy="600" rx="28" ry="23"/><ellipse cx="299" cy="600" rx="13" ry="11"/><ellipse cx="491" cy="600" rx="13" ry="11"/><path d="M271 600H327M299 577V623M280 585L318 615M318 585L280 615M463 600H519M491 577V623M472 585L510 615M510 585L472 615"/></g>
  <use href="#charB"/>
  <use href="#charC"/>
  <g clip-path="url(#kLock)"><rect x="150" y="755" width="180" height="235" fill="url(#pLock)"/></g>
  <g clip-path="url(#kLock)" transform="matrix(-1 0 0 1 788 0)"><rect x="150" y="755" width="180" height="235" fill="url(#pLock)"/></g>
  <path d="M194 793C190 815 184 830 176 847C167 862 160 875 156 890C155 900 158 910 163 920C175 935 190 945 204 950C225 962 255 972 283 976C268 970 258 965 253 958C275 950 310 905 326 865C320 885 310 897 298 903C285 905 270 900 258 888C265 886 275 884 283 877C270 880 255 878 245 868C238 855 232 840 228 820C226 800 226 790 230 770" fill="none" stroke="#7d9bd4"/>
  <path d="M594 793C598 815 604 830 612 847C621 862 628 875 632 890C633 900 630 910 625 920C613 935 598 945 584 950C563 962 533 972 505 976C520 970 530 965 535 958C513 950 478 905 462 865C468 885 478 897 490 903C503 905 518 900 530 888C523 886 513 884 505 877C518 880 533 878 543 868C550 855 556 840 560 820C562 800 562 790 558 770" fill="none" stroke="#7d9bd4"/>
  <g clip-path="url(#kHair)">
    <rect x="0" y="460" width="300" height="300" fill="url(#pHair)"/>
    <rect x="0" y="460" width="210" height="200" fill="url(#pHair2)"/>
  </g>
  <g clip-path="url(#kHair)" transform="matrix(-1 0 0 1 788 0)">
    <rect x="0" y="460" width="300" height="300" fill="url(#pHair)"/>
    <rect x="0" y="460" width="210" height="200" fill="url(#pHair2)"/>
  </g>
  <path d="M199 723L245 757L259 710L280 701L309 691L282 685L309 673L319 653L287 671L255 658L240 628" fill="none" stroke="#7cc3cb" stroke-width="1.100"/>
  <path d="M589 723L543 757L529 710L508 701L479 691L506 685L479 673L469 653L501 671L533 658L548 628" fill="none" stroke="#7cc3cb" stroke-width="1.100"/>
  <use href="#hairS" fill="none" stroke="#8585cb" stroke-width=".9"/><use href="#hairS" fill="none" stroke="#8585cb" stroke-width=".9" transform="matrix(-1 0 0 1 788 0)"/>
  <path d="M314 544C317 565 337 610 337 624C338 645 325 672 314 682L371 654L403 604L411 608L436 544Z" fill="url(#pFace)" opacity=".7"/>
  <g clip-path="url(#kEarL)" fill="none" stroke="#d58d8d" stroke-width=".9">
    <path d="M219 58Q185 180 145 305M219 58Q200 180 175 290M219 58Q218 180 210 290M219 58Q235 180 250 280M219 58Q260 160 295 260M219 58Q290 150 345 245M219 58Q310 140 375 245"/>
    <path d="M145 302C200 285 240 250 275 115M192 135C220 145 250 130 262 105M160 220C210 225 270 180 295 130M148 270C210 260 290 220 325 175M150 330C230 310 320 260 350 210M165 355C250 330 330 290 368 245M205 80Q219 92 235 75"/>
  </g>
  <g clip-path="url(#kEarR)" fill="none" stroke="#d58d8d" stroke-width=".9">
    <path d="M569 58Q530 150 438 240M569 58Q545 150 480 280M569 58Q560 170 530 310M569 58Q573 170 570 310M569 58Q590 170 610 320M569 58Q600 170 635 300"/>
    <path d="M440 230C480 225 560 180 595 120M470 175C510 180 570 150 590 100M505 130C530 135 565 120 582 85M440 270C520 270 600 210 610 190M480 310C540 290 610 250 625 240M540 75Q565 85 585 72"/>
  </g>
  <g clip-path="url(#kDome)" fill="none" stroke="#7fb97f" stroke-width="1">
    <path d="M394 250V410M340 255C325 300 320 350 330 410M300 265C275 300 262 350 270 415M250 285C225 320 215 370 220 430M205 310C190 340 180 390 188 440M170 330C155 360 150 400 158 432M448 255C463 300 468 350 458 410M490 265C515 300 526 350 518 415M540 285C565 320 575 370 570 430M585 310C600 340 610 390 602 440M620 340C632 370 637 400 630 435"/>
    <path d="M150 375C200 310 300 270 394 270C490 270 590 310 640 375M145 400C200 340 300 300 394 300C490 300 590 340 648 400M155 425C200 375 300 335 394 328C490 335 590 375 640 425M200 270L150 360"/>
  </g>
  <use href="#dome" fill="none" stroke="#74b06e" stroke-width="1.200"/>
  <g clip-path="url(#kVisor)" fill="none" stroke="#7fb97f" stroke-width="1">
    <path d="M394 405V540M343 410L335 545M295 418L275 550M250 430L225 565M210 450L190 580M445 410L453 545M493 418L513 550M538 430L563 565M578 450L598 580"/>
    <path d="M182 495C250 450 320 435 394 435C470 435 540 450 606 495M176 525C250 480 320 465 394 462C470 465 540 480 612 525M170 555C250 510 320 497 394 493C470 497 540 510 618 555M200 555C280 525 340 517 394 515C450 517 510 525 590 555"/>
  </g>
  <use href="#visor" fill="none" stroke="#74b06e" stroke-width="1.200"/>
  <path d="M181 445L190 475M610 445L600 475M220 425L235 455M260 410L270 440M520 410L530 440M565 425L555 455M181 460C240 425 300 410 340 405M607 460C550 425 490 410 450 405" fill="none" stroke="#a54433" stroke-width=".9"/>
  <g fill="none" stroke="#7fc9a3" stroke-width="4"><use href="#lens"/><use href="#lens" transform="matrix(-1 0 0 1 788 0)"/></g>
  <path d="M281 310L286 299L393 294L503 299L509 310M286 304L393 299L503 304M375 352C380 352 382 343 388 343H399C405 343 407 353 413 353" fill="none" stroke="#7fc9a3" stroke-width="3"/>
  <path d="M290 312L296 415M342 310L342 405M255 328L262 410M446 312L440 415M498 312L495 410M535 330L530 410" stroke="#b7c9c2" stroke-width=".9" fill="none"/>
  <g fill="none" stroke="#7fbf99" stroke-width=".9"><use href="#ring"/>
    <path d="M378 220L405 229L435 235V253M405 229V251M458 248L465 246L528 259L525 277M575 267L589 266L641 280L634 303L586 293L570 291M575 267L586 274L584 295M586 274L641 280M657 276L696 278M657 276L652 300M502 239L500 265M535 246L530 280M435 214L430 235M461 229L458 248"/></g>
</g>
<g>
  <path d="M0 32Q0 26 6 26H789Q795 26 795 32V54H711V74Q711 78 715 78H795V54H148V74Q148 78 144 78H0Z" fill="#5e5e5e"/>
  <use href="#hdr"/>
  <path d="M620 28H657Q660 28 660 31V45Q660 48 657 48H620Z" fill="#262626"/><path d="M623 28H640V48H623Q620 48 620 45V31Q620 28 623 28Z" fill="#4772b3"/>
  <g transform="translate(630,38)" style="color:#fff"><use href="#iOver"/></g><use href="#chv" transform="translate(650,39)"/>
  <use href="#sel"/><use href="#opt"/>
  <use href="#giz"/>
  <rect x="0" y="100" width="9" height="18" rx="2" fill="#b4b4b8"/><rect x="786" y="100" width="9" height="18" rx="2" fill="#b4b4b8"/>
  <text x="10" y="98" class="ov">Front Orthographic</text>
  <text x="10" y="116" class="ov">(55) Scene Collection | Body.002</text>
  <text x="10" y="134" class="ov">Centimeters</text>
</g>

<!-- RIGHT VIEWPORT -->
<g clip-path="url(#cR)">
  <rect x="798" y="26" width="790" height="959" fill="#dfdfe6"/>
  <use href="#char" transform="translate(800.600,-1.800) scale(.996)"/>
  <path d="M1092 935C1130 945 1170 950 1190 945C1220 945 1260 935 1295 935" fill="none" stroke="#6b5f5f" stroke-width=".6"/>
  <path d="M798 32Q798 26 804 26H1582Q1588 26 1588 32V54H1505V74Q1505 78 1509 78H1588V54H945V74Q945 78 941 78H798Z" fill="#5e5e5e"/>
  <use href="#hdr" transform="translate(794,0)"/>
  <rect x="1414" y="28" width="40" height="20" rx="3" fill="#262626"/><rect x="1434" y="28" width="20" height="20" rx="3" fill="#5a5a5a"/>
  <g transform="translate(1424,38)" style="color:#d8d8d8"><use href="#iOver"/></g><use href="#chv" transform="translate(1444,39)" opacity=".4"/>
  <use href="#sel" transform="translate(797,0)"/><use href="#opt" transform="translate(794,0)"/>
  <use href="#giz" transform="translate(794,0)"/>
  <rect x="798" y="100" width="8" height="18" rx="2" fill="#b4b4b8"/><rect x="1579" y="100" width="9" height="18" rx="2" fill="#b4b4b8"/>
</g>

<!-- TOP BAR -->
<g>
  <g transform="translate(18,13)"><circle cx="1" cy="1" r="6" fill="none" stroke="#e8e8e8" stroke-width="2"/><circle cx="1" cy="1" r="2.200" fill="#e8e8e8"/><path d="M-7 -1L-1-4.500M-9 2L-3 2M-3-7L3-5" stroke="#e8e8e8" stroke-width="1.700" fill="none"/></g>
  <text x="35" y="17" class="m">File</text><text x="69" y="17" class="m">Edit</text><text x="105" y="17" class="m">Render</text><text x="157" y="17" class="m">Window</text><text x="216" y="17" class="m">Help</text>
  <path d="M321 25V9Q321 6 324 6H386Q389 6 389 9V25Z" fill="#303030"/>
  <text x="274" y="20" class="t">Layout</text><text x="330" y="20" style="fill:#fff">Modeling</text><text x="400" y="20" class="t">Sculpting</text><text x="471" y="20" class="t">UV Editing</text><text x="548" y="20" class="t">Texture Paint</text><text x="638" y="20" class="t">Shading</text><text x="702" y="20" class="t">Animation</text><text x="776" y="20" class="t">Rendering</text><text x="851" y="20" class="t">Compositing</text><text x="940" y="20" class="t">Geometry Nodes</text><text x="1048" y="20" class="t">Scripting</text><text x="1111" y="20" class="t" style="font-size:16px">+</text>
  <rect x="1584" y="4" width="170" height="18" rx="3" fill="#1d1d1d" stroke="#333"/><rect x="1584" y="4" width="30" height="18" rx="3" fill="#2c2c2c"/>
  <use href="#iScene" transform="translate(1595,13)"/><use href="#chv" transform="translate(1608,14)"/>
  <text x="1622" y="17.500" class="h">Scene</text><use href="#iPin" transform="translate(1703,13)"/>
  <rect x="1715" y="4" width="19" height="18" fill="#4f4f4f"/><use href="#iCopy" transform="translate(1725,13)"/><rect x="1734" y="4" width="20" height="18" rx="3" fill="#2f2f2f"/><use href="#iX" transform="translate(1745,13)" opacity=".35"/>
  <rect x="1760" y="4" width="151" height="18" rx="3" fill="#1d1d1d" stroke="#333"/><rect x="1760" y="4" width="31" height="18" rx="3" fill="#2c2c2c"/>
  <use href="#iLayer" transform="translate(1772,13)"/><use href="#chv" transform="translate(1785,14)"/>
  <text x="1799" y="17.500" class="h">ViewLayer</text>
  <rect x="1872" y="4" width="19" height="18" fill="#4f4f4f"/><use href="#iCopy" transform="translate(1882,13)"/><rect x="1891" y="4" width="20" height="18" rx="3" fill="#2f2f2f"/><use href="#iX" transform="translate(1902,13)" opacity=".35"/>
</g>

<!-- OUTLINER -->
<g>
  <rect x="1592" y="27" width="327" height="166" rx="5" fill="#2b2b2b"/>
  <rect x="1600" y="28" width="32" height="20" rx="3" fill="#222" stroke="#3a3a3a"/><rect x="1637" y="28" width="31" height="20" rx="3" fill="#222" stroke="#3a3a3a"/>
  <path d="M1606 32H1611V35H1606ZM1608 35V44M1608 39H1612M1608 44H1612M1613 38H1619V40H1613ZM1613 43H1619V45H1613Z" fill="#d8d8d8" stroke="#d8d8d8" stroke-width=".6"/><use href="#chv" transform="translate(1626,39)"/>
  <use href="#iLayer" transform="translate(1649,38)"/><use href="#chv" transform="translate(1663,39)"/>
  <rect x="1685" y="28" width="118" height="20" rx="4" fill="#1d1d1d" stroke="#3a3a3a"/><use href="#iSearch" transform="translate(1697,38)"/><text x="1711" y="42.500" style="fill:#6a6a6a">Search</text>
  <rect x="1855" y="28" width="32" height="20" rx="3" fill="#222" stroke="#3a3a3a"/><path d="M1860 32H1873L1868 39V46L1865 44V39Z" fill="none" stroke="#ddd" stroke-width="1.100"/><use href="#chv" transform="translate(1880,39)"/>
  <rect x="1893" y="28" width="18" height="20" rx="3" fill="#555"/><path d="M1897 33H1905V44H1897ZM1901 38H1905" fill="none" stroke="#cfcfcf" stroke-width="1.100"/><circle cx="1906" cy="34" r="3" fill="#cfcfcf"/>
  <g clip-path="url(#cOut)">
    <rect x="1592" y="64" width="327" height="20" fill="#2f2f2f"/><rect x="1592" y="104" width="327" height="20" fill="#2f2f2f"/><rect x="1592" y="144" width="327" height="20" fill="#2f2f2f"/><rect x="1592" y="184" width="327" height="20" fill="#2f2f2f"/>
    <path d="M1621 67V193" stroke="#4d4d4d"/>
    <use href="#chv" transform="translate(1622,54)"/><rect x="1636" y="50" width="12" height="9" fill="#cfcfcf"/><text x="1656" y="58" class="o">Hair</text>
    <rect x="1855" y="50" width="10" height="8" rx="1" fill="#e0e0e0"/><use href="#iEye" transform="translate(1880,54)"/><use href="#iCam" transform="translate(1900,54)"/>
    <g><use href="#chr" transform="translate(1642,74)"/><use href="#iObj" transform="translate(1662,73)"/><text x="1676" y="78" class="o">Head.001</text><use href="#iWr" transform="translate(1757,73)"/><use href="#iMod" transform="translate(1777,73)"/><use href="#iTri" transform="translate(1797,73)"/><use href="#iEye" transform="translate(1880,73)"/><use href="#iCam" transform="translate(1900,73)"/></g>
    <g transform="translate(0,20)"><use href="#chr" transform="translate(1642,74)"/><use href="#iObj" transform="translate(1662,73)"/><text x="1676" y="78" class="o">Head.002</text><use href="#iWr" transform="translate(1757,73)"/><use href="#iMod" transform="translate(1777,73)"/><use href="#iTri" transform="translate(1797,73)"/><use href="#iEye" transform="translate(1880,73)"/><use href="#iCam" transform="translate(1900,73)"/></g>
    <g transform="translate(0,40)"><use href="#chr" transform="translate(1642,74)"/><use href="#iObj" transform="translate(1662,73)"/><text x="1676" y="78" class="o">Head.003</text><use href="#iWr" transform="translate(1757,73)"/><use href="#iMod" transform="translate(1777,73)"/><use href="#iTri" transform="translate(1797,73)"/><use href="#iEye" transform="translate(1880,73)"/><use href="#iCam" transform="translate(1900,73)"/></g>
    <g transform="translate(0,60)"><use href="#chr" transform="translate(1642,74)"/><use href="#iObj" transform="translate(1662,73)"/><text x="1676" y="78" class="o">NurbsPath</text><use href="#iWr" transform="translate(1762,73)"/><use href="#iMod" transform="translate(1782,73)"/><use href="#iTri" transform="translate(1802,73)"/><use href="#iEye" transform="translate(1880,73)"/><use href="#iCam" transform="translate(1900,73)"/></g>
    <g transform="translate(0,80)"><use href="#chr" transform="translate(1642,74)"/><use href="#iObj" transform="translate(1662,73)"/><text x="1676" y="78" class="o">NurbsPath.001</text><use href="#iWr" transform="translate(1786,73)"/><use href="#iMod" transform="translate(1806,73)"/><use href="#iTri" transform="translate(1826,73)"/><use href="#iEye" transform="translate(1880,73)"/><use href="#iCam" transform="translate(1900,73)"/></g>
    <g transform="translate(0,100)"><use href="#chr" transform="translate(1642,74)"/><use href="#iObj" transform="translate(1662,73)"/><text x="1676" y="78" class="o">NurbsPath.002</text><use href="#iWr" transform="translate(1786,73)"/><use href="#iMod" transform="translate(1806,73)"/><use href="#iTri" transform="translate(1826,73)"/><use href="#iEye" transform="translate(1880,73)"/><use href="#iCam" transform="translate(1900,73)"/></g>
    <g transform="translate(0,120)"><use href="#chr" transform="translate(1642,74)"/><use href="#iObj" transform="translate(1662,73)"/><text x="1676" y="78" class="o">NurbsPath.003</text><use href="#iWr" transform="translate(1786,73)"/><use href="#iMod" transform="translate(1806,73)"/><use href="#iTri" transform="translate(1826,73)"/><use href="#iEye" transform="translate(1880,73)"/><use href="#iCam" transform="translate(1900,73)"/></g>
  </g>
  <rect x="1915" y="88" width="2.500" height="28" rx="1" fill="#4a4a4a"/>
</g>

<!-- IMAGE EDITOR -->
<g>
  <path d="M1592 198H1920V222H1592Z" fill="#2b2b2b"/>
  <rect x="1592" y="200" width="71" height="20" fill="#1d1d1d"/><text x="1593" y="214.500" style="fill:#d8d8d8">-20-29.png</text>
  <rect x="1663" y="200" width="80" height="20" rx="3" fill="#545454"/><path d="M1683 200V220M1703 200V220M1723 200V220" stroke="#3a3a3a"/>
  <path d="M1667 204L1674 202L1680 204V212C1680 216 1676 218 1674 219C1671 218 1667 216 1667 212Z" fill="none" stroke="#999" stroke-width="1.100"/>
  <use href="#iCopy" transform="translate(1694,210)"/><path d="M1707 205H1713L1715 207H1721V217H1707Z" fill="#ddd"/><use href="#iX" transform="translate(1733,210)"/>
  <use href="#iPin" transform="translate(1759,210)"/>
  <rect x="1786" y="200" width="38" height="20" rx="3" fill="#262626"/><path d="M1789 200H1804V220H1789Q1786 220 1786 217V203Q1786 200 1789 200Z" fill="#4772b3"/><use href="#iGiz" transform="translate(1795,210)"/><use href="#chv" transform="translate(1814,211)"/>
  <rect x="1831" y="200" width="38" height="20" rx="3" fill="#262626"/><path d="M1834 200H1849V220H1834Q1831 220 1831 217V203Q1831 200 1834 200Z" fill="#4772b3"/><g transform="translate(1840,210)" style="color:#fff"><use href="#iOver"/></g><use href="#chv" transform="translate(1859,211)"/>
  <rect x="1881" y="200" width="30" height="20" rx="3" fill="#262626"/><rect x="1885" y="203" width="13" height="13" fill="#eee"/><path d="M1885 203L1898 216H1885Z" fill="#222"/><use href="#chv" transform="translate(1905,211)"/>
  <g clip-path="url(#cImg)">
    <rect x="1592" y="222" width="328" height="353" fill="#ece9e6"/>
    <use href="#char" transform="translate(1456,-74) scale(.763)"/>
    <path d="M1632 475L1700 518V575H1625L1640 520Z" fill="#7a1a1c"/><path d="M1878 475L1810 518V575H1885L1870 520Z" fill="#7a1a1c"/>
    <path d="M1700 522L1635 575H1660L1704 532Z" fill="#5a1214"/><path d="M1810 522L1875 575H1850L1806 532Z" fill="#5a1214"/>
    <path d="M1612 575C1625 565 1640 552 1648 540C1645 555 1640 568 1635 575Z" fill="#fff"/><path d="M1898 575C1885 565 1870 552 1862 540C1865 555 1870 568 1875 575Z" fill="#fff"/>
    <rect x="1705" y="552" width="120" height="26" fill="#282c38"/>
    <path d="M1704 528C1725 540 1785 540 1806 528V546C1785 556 1725 556 1704 546Z" fill="#96723f"/>
    <path d="M1592 222H1920V266L1880 240C1840 226 1790 226 1755 225C1700 226 1650 232 1592 270Z" fill="#5c120d"/>
    <path d="M1592 270C1640 240 1690 227 1755 225C1820 227 1880 240 1920 265V362C1880 340 1830 322 1755 322C1680 322 1630 340 1592 365Z" fill="url(#gHatI)"/>
    <g transform="translate(1456,-74) scale(.763)" fill="#803930" stroke="#b39c62" stroke-width="3.400"><use href="#lens"/><use href="#lens" transform="matrix(-1 0 0 1 788 0)"/></g>
  </g>
  <circle cx="1896" cy="245" r="6" fill="#fff"/><path d="M1896 242V248M1893 245H1899" stroke="#333"/><path d="M1892 250L1887 255" stroke="#fff" stroke-width="2.400"/>
  <circle cx="1896" cy="277" r="13" fill="#2c2c2c" opacity=".7"/>
  <path d="M1890 276V281C1890 285 1893 287 1896 287C1901 287 1902 284 1902 281V273M1899 280V269M1896 280V268M1893 280V270" fill="none" stroke="#fff" stroke-width="2" stroke-linecap="round"/>
  <path d="M1593 250L1597 254L1593 258M1918 250L1914 254L1918 258" fill="none" stroke="#ccc"/>
</g>

<!-- PROPERTIES -->
<g>
  <rect x="1592" y="580" width="327" height="405" rx="5" fill="#303030"/>
  <path d="M1597 580H1914Q1919 580 1919 585V605H1592V585Q1592 580 1597 580Z" fill="#2b2b2b"/>
  <path d="M1592 605H1620V985H1597Q1592 985 1592 980Z" fill="#1f1f1f"/>
  <rect x="1600" y="582" width="32" height="20" rx="3" fill="#222" stroke="#3a3a3a"/>
  <rect x="1605" y="585" width="14" height="5.500" rx="2.700" fill="#ddd"/><rect x="1605" y="593" width="14" height="5.500" rx="2.700" fill="#ddd"/><use href="#chv" transform="translate(1626,592)"/>
  <rect x="1697" y="582" width="118" height="18" rx="4" fill="#1d1d1d" stroke="#3a3a3a"/><use href="#iSearch" transform="translate(1709,591)"/><text x="1723" y="595.500" style="fill:#6a6a6a">Search</text>
  <rect x="1893" y="582" width="19" height="19" rx="3" fill="#222" stroke="#3a3a3a"/><use href="#chv" transform="translate(1902,592)"/>
  <path d="M1594 814Q1594 811 1597 811H1620V837H1597Q1594 837 1594 834Z" fill="#303030"/>
  <path d="M1594 626H1620M1594 774H1620M1594 980H1620" stroke="#2a2a2a"/>
  <path d="M1603 606V612M1603 614V618M1610 606V608M1607 606C1607 610 1613 610 1613 606M1610 610V618" stroke="#cfcfcf" stroke-width="2" fill="none"/>
  <g transform="translate(1607,648)"><rect x="-6.500" y="-4" width="13" height="9.500" rx="1" fill="none" stroke="#c8c8c8" stroke-width="1.200"/><rect x="-3" y="-6.500" width="5" height="2.500" fill="#c8c8c8"/><path d="M1-1.500H5M1 1H5M1 3.500H5" stroke="#c8c8c8"/></g>
  <g transform="translate(1607,676)"><path d="M-7-6H7V-2H-7Z" fill="#c8c8c8"/><path d="M-5-2V6H5V-2" fill="none" stroke="#c8c8c8" stroke-width="1.200"/><path d="M-3 4L0 0L3 4Z" fill="#c8c8c8"/></g>
  <use href="#iLayer" transform="translate(1607,704)"/>
  <use href="#iScene" transform="translate(1607,732)"/>
  <g transform="translate(1607,760)"><circle r="6.500" fill="#a33f4a"/><path d="M-5-2C-2-4 0 0 3-3M-3 3C0 0 2 5 5 2" stroke="#2a2020" fill="none" stroke-width="1.300"/><path d="M-7 6L7-6" stroke="#a33f4a" opacity=".6"/></g>
  <g transform="translate(1607,796)"><rect x="-5" y="-5" width="10" height="10" fill="#c68648"/><path d="M-7-4V-7H-4M4-7H7V-4M7 4V7H4M-4 7H-7V4" fill="none" stroke="#c8c8c8"/></g>
  <path d="M1601 830C1600 828 1603 826 1605 824L1607 822C1606 819 1608 816 1613 816L1610 819L1611 821L1614 820C1615 824 1611 826 1609 825L1606 828C1604 830 1602 831 1601 830Z" fill="#5e8fe6" stroke="#5e8fe6" stroke-width="1.200"/>
  <g transform="translate(1607,852)" fill="none" stroke="#5680c2"><circle cx="-5" cy="-5" r="2" fill="#5680c2"/><circle cx="-5" cy="5" r="1.500" fill="#5680c2"/><circle cx="6" cy="5" r="1.500" fill="#5680c2"/><circle cx="6" cy="-5" r="1.300" fill="#5680c2"/><path d="M-5-3V5M-3-5H6M-3-3L6 5" stroke-width="1.200"/></g>
  <g transform="translate(1607,880)"><circle r="2.800" fill="#5680c2"/><path d="M4.500-4A6.500 6.500 0 1 0 6 2" fill="none" stroke="#5680c2" stroke-width="1.400"/><circle cx="5" cy="-5" r="1.600" fill="#5680c2"/></g>
  <g transform="translate(1607,908)" fill="none" stroke="#5680c2" stroke-width="1.300"><path d="M-4 7C-8 7-8 2-6-1L2-6C5-8 7-7 7-4C7 0 3 7-4 7Z"/><circle cx="-1" cy="2" r="3"/><circle cx="-1" cy="2" r="1" fill="#5680c2"/></g>
  <use href="#iTri" transform="translate(1607,936)"/>
  <g transform="translate(1607,964)"><circle r="7" fill="#a8505a"/><path d="M0-7A7 7 0 0 1 7 0L0 0Z" fill="#2e2020"/><path d="M-6 4A7 7 0 0 0 6 4L0 0Z" fill="#2e2020"/></g>
  <g transform="translate(1638,623)"><rect x="-4.500" y="-4.500" width="9" height="9" fill="#d8d8d8"/><path d="M-7-4V-7H-4M4-7H7V-4M7 4V7H4M-4 7H-7V4" fill="none" stroke="#bbb"/></g>
  <text x="1654" y="627" class="h">Body.002</text><use href="#chr" transform="translate(1724,622)"/><use href="#iArm" transform="translate(1743,622)"/><text x="1760" y="627" class="h">Armature</text><use href="#iPin" transform="translate(1902,623)"/>
  <rect x="1629" y="650" width="283" height="18.500" rx="3" fill="#545454"/><path d="M1636 659H1645M1640.500 654.500V663.500" stroke="#ddd" stroke-width="1.200"/>
  <text x="1778" y="663.500" text-anchor="middle" style="fill:#eee">Add Modifier</text>
  <rect x="1629" y="679" width="283" height="24" rx="4" fill="#3d3d3d"/>
  <use href="#chr" transform="translate(1641,691)"/>
  <g transform="translate(1657,692)" fill="none" stroke="#bbb"><path d="M-2-6C-7-7-8-3-5-1C-8 2-7 6-2 6M2-6C7-7 8-3 5-1C8 2 7 6 2 6"/><path d="M0-7V7" stroke-dasharray="2 1.500"/></g>
  <rect x="1677" y="683" width="84" height="18" rx="3" fill="#1d1d1d"/><text x="1684" y="696.500" style="fill:#e6e6e6">Mirror</text>
  <rect x="1761" y="683" width="20" height="18" fill="#545454"/><rect x="1782" y="683" width="19" height="18" fill="#4772b3"/><rect x="1802" y="683" width="19" height="18" fill="#4772b3"/><rect x="1822" y="683" width="19" height="18" fill="#4772b3"/><rect x="1842" y="683" width="19" height="18" rx="3" fill="#1d1d1d"/>
  <g transform="translate(1772,692)" style="color:#888"><use href="#iMesh"/></g><use href="#iEdit" transform="translate(1792,692)"/><use href="#iDisp" transform="translate(1812,692)"/><use href="#iCamW" transform="translate(1832,691)"/><path d="M1847 690L1852 694.500L1857 690" fill="none" stroke="#ddd" stroke-width="1.200"/>
  <use href="#iX" transform="translate(1872,692)"/><path d="M1892 690H1902M1892 694H1902" stroke="#777" stroke-dasharray="1 1.500"/>
  <rect x="1629" y="706.500" width="283" height="24" rx="4" fill="#3d3d3d" stroke="#4772b3"/>
  <use href="#chr" transform="translate(1641,718)"/><use href="#iArm" transform="translate(1657,719)"/>
  <rect x="1677" y="710" width="84" height="18" rx="3" fill="#1d1d1d"/><text x="1684" y="723.500" style="fill:#e6e6e6">Armature</text>
  <rect x="1762" y="710" width="19" height="18" fill="#4772b3"/><rect x="1782" y="710" width="19" height="18" fill="#4772b3"/><rect x="1802" y="710" width="19" height="18" fill="#4772b3"/><rect x="1822" y="710" width="19" height="18" fill="#4772b3"/><rect x="1842" y="710" width="19" height="18" rx="3" fill="#1d1d1d"/>
  <g transform="translate(1772,719)" style="color:#fff"><use href="#iMesh"/></g><use href="#iEdit" transform="translate(1792,719)"/><use href="#iDisp" transform="translate(1812,719)"/><use href="#iCamW" transform="translate(1832,718)"/><path d="M1847 717L1852 721.500L1857 717" fill="none" stroke="#ddd" stroke-width="1.200"/>
  <use href="#iX" transform="translate(1872,719)"/><path d="M1892 717H1902M1892 721H1902" stroke="#777" stroke-dasharray="1 1.500"/>
</g>

<!-- STATUS BAR -->
<g>
  <rect x="10.500" y="991.500" width="11" height="14" rx="4" fill="none" stroke="#9a9a9a"/><rect x="14" y="993" width="4" height="6" rx="1.500" fill="#9a9a9a"/><path d="M24 992V997" stroke="#9a9a9a"/>
  <text x="28" y="1002" style="fill:#a0a0a0">Pan</text>
  <rect x="57.500" y="991.500" width="11" height="14" rx="4" fill="none" stroke="#9a9a9a"/><path d="M63 991.500H65C67 991.500 68.500 993 68.500 995V998H63Z" fill="#9a9a9a"/>
  <text x="71" y="1002" style="fill:#a0a0a0">Options</text>
  <text x="1908" y="1002" text-anchor="end" style="fill:#7a7a7a">4.5.8</text>
</g>
</svg>
</body></html>
